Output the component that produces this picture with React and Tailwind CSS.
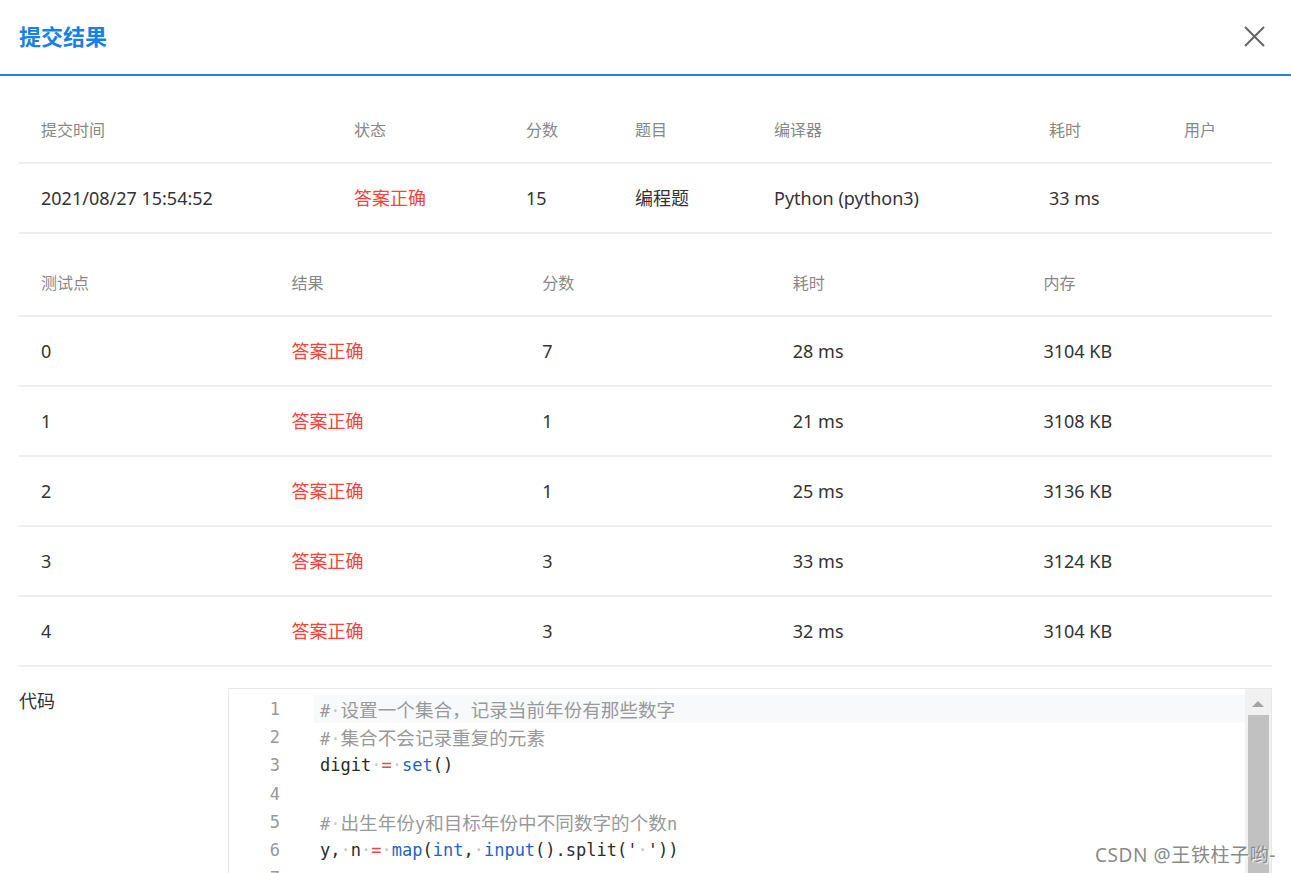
import React from "react";

const sans = "font-['Noto_Sans','Noto_Sans_CJK_SC',sans-serif]";

const summaryCols = "grid grid-cols-[313px_172px_109px_139px_275px_135px_110px]";

const cases = [
  ["0", "7", "28 ms", "3104 KB"],
  ["1", "1", "21 ms", "3108 KB"],
  ["2", "1", "25 ms", "3136 KB"],
  ["3", "3", "33 ms", "3124 KB"],
  ["4", "3", "32 ms", "3104 KB"],
];

const Dot = () => <span className="text-[#c8c8c8]">·</span>;
const Cjk = ({ children }) => (
  <span className="font-['Noto_Sans_CJK_SC',sans-serif] text-[18.6px]">{children}</span>
);
const Kw = ({ children }) => <span className="text-[#1d63c9]">{children}</span>;
const Op = ({ children }) => <span className="text-[#e5484d]">{children}</span>;

// each line is a list of tokens
const codeLines = [
  <span className="text-[#999]">#<Dot /><Cjk>设置一个集合，记录当前年份有那些数字</Cjk></span>,
  <span className="text-[#999]">#<Dot /><Cjk>集合不会记录重复的元素</Cjk></span>,
  <>digit<Dot /><Op>=</Op><Dot /><Kw>set</Kw>()</>,
  <></>,
  <span className="text-[#999]">#<Dot /><Cjk>出生年份</Cjk>y<Cjk>和目标年份中不同数字的个数</Cjk>n</span>,
  <>y,<Dot />n<Dot /><Op>=</Op><Dot /><Kw>map</Kw>(<Kw>int</Kw>,<Dot /><Kw>input</Kw>().split('<Dot />'))</>,
  <></>,
  <></>,
];

const HeadCell = ({ children }) => (
  <div className="flex items-center pl-[22px] text-[16px] text-[#888]">{children}</div>
);
const Cell = ({ children, red }) => (
  <div className={`flex items-center pl-[22px] text-[18px] ${red ? "text-[#f5443c]" : "text-[#333]"}`}>
    {children}
  </div>
);

export default function App() {
  return (
    <div className={`relative h-[873px] w-full overflow-hidden bg-white ${sans}`}>
      {/* title bar */}
      <div className="flex h-[76px] items-center justify-between border-b-2 border-[#1e80e8] px-[19px] pb-[2px]">
        <h1 className="text-[22px] font-bold text-[#1a7fe8]">提交结果</h1>
        <svg width="21" height="21" viewBox="0 0 21 21" className="mr-[7px]">
          <path d="M1 1 L20 20 M20 1 L1 20" stroke="#666" strokeWidth="2" fill="none" />
        </svg>
      </div>

      <div className="px-[19px] pt-[22px]">
        {/* summary */}
        <div className={`${summaryCols} h-[66px] border-b-2 border-[#eee]`}>
          <HeadCell>提交时间</HeadCell>
          <HeadCell>状态</HeadCell>
          <HeadCell>分数</HeadCell>
          <HeadCell>题目</HeadCell>
          <HeadCell>编译器</HeadCell>
          <HeadCell>耗时</HeadCell>
          <HeadCell>用户</HeadCell>
        </div>
        <div className={`${summaryCols} h-[70px] border-b-2 border-[#eee]`}>
          <Cell>2021/08/27 15:54:52</Cell>
          <Cell red>答案正确</Cell>
          <Cell>15</Cell>
          <Cell>编程题</Cell>
          <Cell>Python (python3)</Cell>
          <Cell>33 ms</Cell>
          <Cell></Cell>
        </div>

        {/* test cases */}
        <div className="mt-[17px] grid h-[66px] grid-cols-5 border-b-2 border-[#eee]">
          <HeadCell>测试点</HeadCell>
          <HeadCell>结果</HeadCell>
          <HeadCell>分数</HeadCell>
          <HeadCell>耗时</HeadCell>
          <HeadCell>内存</HeadCell>
        </div>
        {cases.map((c) => (
          <div key={c[0]} className="grid h-[70px] grid-cols-5 border-b-2 border-[#eee]">
            <Cell>{c[0]}</Cell>
            <Cell red>答案正确</Cell>
            <Cell>{c[1]}</Cell>
            <Cell>{c[2]}</Cell>
            <Cell>{c[3]}</Cell>
          </div>
        ))}

        {/* code */}
        <div className="mt-[21px] flex">
          <div className="w-[209px] pt-[1px] text-[18px] leading-[24px] text-[#333]">代码</div>
          <div className="flex h-[300px] flex-1 border border-[#e8e8e8]">
            <div className="flex-1 pt-[6px] font-['DejaVu_Sans_Mono',monospace] text-[17px] leading-[28.2px] text-[#2b2b2b]">
              {codeLines.map((line, i) => (
                <div key={i} className="flex h-[28.2px]">
                  <div className="w-[85px] shrink-0 pr-[34px] text-right text-[#999]">{i + 1}</div>
                  <div className={`flex-1 whitespace-pre pl-[6px] ${i === 0 ? "bg-[#f7f9fb]" : ""}`}>{line}</div>
                </div>
              ))}
            </div>
            <div className="flex w-[26px] flex-col items-center bg-[#f1f1f1] pt-[12px]">
              <div className="h-0 w-0 border-x-[6px] border-b-[6px] border-x-transparent border-b-[#a3a3a3]" />
              <div className="mt-[8px] w-[21px] flex-1 bg-[#c1c1c1]" />
            </div>
          </div>
        </div>
      </div>

      {/* watermark */}
      <div className="absolute right-[15px] top-[841px] text-[19px] tracking-[0.6px] text-[#8a8a8a] [text-shadow:1px_1px_1px_#fff]">
        CSDN @王铁柱子哟-
      </div>
    </div>
  );
}
